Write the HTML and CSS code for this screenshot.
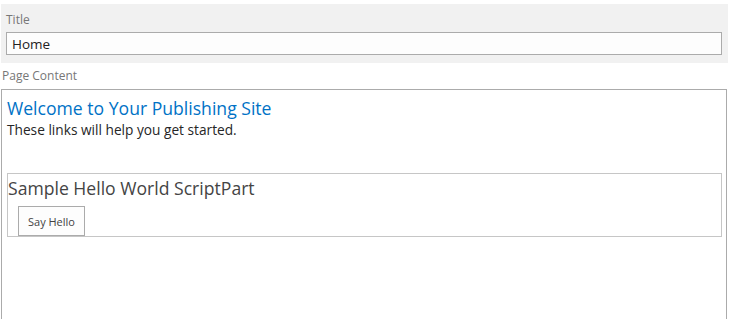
FILE: index.html
```html
<html>
<head>
    <title>Edit Page</title>
    <!-- Styling -->
    <link rel="stylesheet" href="styles.css">
</head>
<body>
    <div class="title-panel">
        <div class="field-label">Title</div>
        <input type="text" class="title-input" value="Home">
    </div>

    <div class="content-label">Page Content</div>
    <div class="page-content">
        <h1 class="welcome">Welcome to Your Publishing Site</h1>
        <p class="intro">These links will help you get started.</p>

        <!-- Script part -->
        <div class="script-part">
            <h2 class="part-title">Sample Hello World ScriptPart</h2>
            <button type="button" class="say-hello">Say Hello</button>
        </div>
    </div>
</body>
</html>
```

FILE: styles.css
```css
html {
    height: 100%;
    overflow: hidden;
}

body {
    margin: 0;
    height: 100%;
    box-sizing: border-box;
    overflow: hidden;
    padding: 4px 1px 0 1px;
    font-family: "Open Sans", "Noto Sans", sans-serif;
    color: #444444;
    background-color: white;
}

.title-panel {
    background-color: #f1f1f1;
    padding: 8px 6px 8px 5px;
}

.field-label {
    font-size: 12px;
    color: #777777;
    line-height: 16px;
    margin-bottom: 4px;
}

.title-input {
    display: block;
    width: 100%;
    box-sizing: border-box;
    height: 23px;
    border: 1px solid #ababab;
    background-color: #fdfdfd;
    padding: 0 5px;
    font-family: "Open Sans", "Noto Sans", sans-serif;
    font-size: 13.5px;
    color: #222222;
}

.content-label {
    font-size: 12px;
    color: #777777;
    line-height: 16px;
    margin: 5px 0 5px 1px;
}

.page-content {
    border: 1px solid #ababab;
    margin-right: 1px;
    height: 260px;
    padding: 6px 4px 0 5px;
}

.welcome {
    font-size: 17.6px;
    font-weight: normal;
    color: #0072c6;
    margin: 0;
    line-height: 25px;
}

.intro {
    font-size: 13.7px;
    color: #262626;
    margin: 0 0 34px 0;
    line-height: 18px;
}

.script-part {
    border: 1px solid #c6c6c6;
    height: 62px;
}

.part-title {
    font-size: 17.6px;
    font-weight: normal;
    color: #444444;
    margin: 2px 0 6px 0;
    line-height: 24px;
}

.say-hello {
    display: block;
    margin-left: 10px;
    width: 67px;
    height: 30px;
    border: 1px solid #ababab;
    background-color: #fdfdfd;
    font-family: "Open Sans", "Noto Sans", sans-serif;
    font-size: 11px;
    color: #444444;
    padding: 0;
    cursor: pointer;
}

.say-hello:hover {
    opacity: 0.8;
}
```
